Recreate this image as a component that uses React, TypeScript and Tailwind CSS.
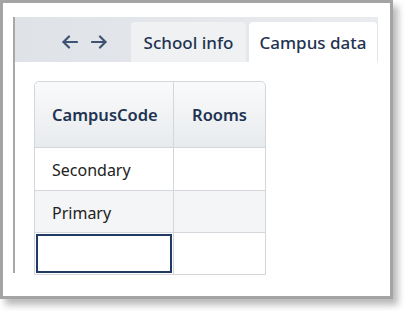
import React from "react";

const font = { fontFamily: '"Noto Sans", "Open Sans", sans-serif' };

function Arrow({ dir }: { dir: "left" | "right" }) {
  return (
    <svg width="16" height="14" viewBox="0 0 16 14" fill="none" stroke="#3f5472" strokeWidth="2.2" strokeLinecap="round" strokeLinejoin="round">
      {dir === "left" ? (
        <>
          <path d="M15 7H1.5" />
          <path d="M7 1.5L1.5 7L7 12.5" />
        </>
      ) : (
        <>
          <path d="M1 7h13.5" />
          <path d="M9 1.5L14.5 7L9 12.5" />
        </>
      )}
    </svg>
  );
}

export default function App() {
  return (
    <div className="w-[405px] h-[311px] bg-white overflow-hidden" style={font}>
      <div className="w-[393px] h-[299px] border-[3px] border-[#a4a4a4] bg-white shadow-[5px_6px_7px_rgba(0,0,0,0.28)] pl-[10px] pt-[14px]">
        <div className="w-[365px] h-[256px] border-l-2 border-[#a8a8a8] flex flex-col">
          <div className="h-[45px] shrink-0 bg-gradient-to-r from-[#dfe2e7] to-[#e9ebee] flex items-end">
            <div className="w-[116px] h-full flex items-center justify-center gap-[13px] pl-[22px] pt-[5px]">
              <Arrow dir="left" />
              <Arrow dir="right" />
            </div>
            <div className="w-[115px] h-[40px] bg-[#eff1f3] rounded-t-[4px] flex items-center justify-center pt-[2px] text-[17px] font-medium text-[#1f3352]">
              School info
            </div>
            <div className="w-[3px]" />
            <div className="w-[129px] h-[40px] bg-white rounded-t-[4px] border-r border-[#e3e6ea] flex items-center justify-center pt-[2px] text-[17px] font-medium text-[#1f3352]">
              Campus data
            </div>
          </div>
          <div className="pl-[19px] pt-[19px]">
            <div className="w-[232px] border border-[#d3d7dc] rounded-t-[5px] relative">
              <div className="flex h-[66px] rounded-t-[5px] bg-gradient-to-b from-[#f9fafb] to-[#e8ebee] border-b border-[#d3d7dc]">
                <div className="w-[139px] border-r border-[#d3d7dc] flex items-center pl-[17px] pt-[2px] text-[16.5px] font-semibold text-[#1f3352]">
                  CampusCode
                </div>
                <div className="flex-1 flex items-center justify-center pt-[2px] text-[16.5px] font-semibold text-[#1f3352]">
                  Rooms
                </div>
              </div>
              <div className="flex h-[43px] border-b border-[#d3d7dc] bg-white">
                <div className="w-[139px] border-r border-[#d3d7dc] flex items-center pl-[17px] pt-[2px] text-[16px] text-[#222]">
                  Secondary
                </div>
                <div className="flex-1" />
              </div>
              <div className="flex h-[42px] border-b border-[#d3d7dc] bg-[#f4f5f6]">
                <div className="w-[139px] border-r border-[#d3d7dc] flex items-center pl-[17px] pt-[2px] text-[16px] text-[#222]">
                  Primary
                </div>
                <div className="flex-1" />
              </div>
              <div className="flex h-[41px] bg-white">
                <div className="w-[139px] border-r border-[#d3d7dc] p-[1px]">
                  <div className="w-full h-full border-2 border-[#1f3a63]" />
                </div>
                <div className="flex-1" />
              </div>
            </div>
          </div>
        </div>
      </div>
    </div>
  );
}
